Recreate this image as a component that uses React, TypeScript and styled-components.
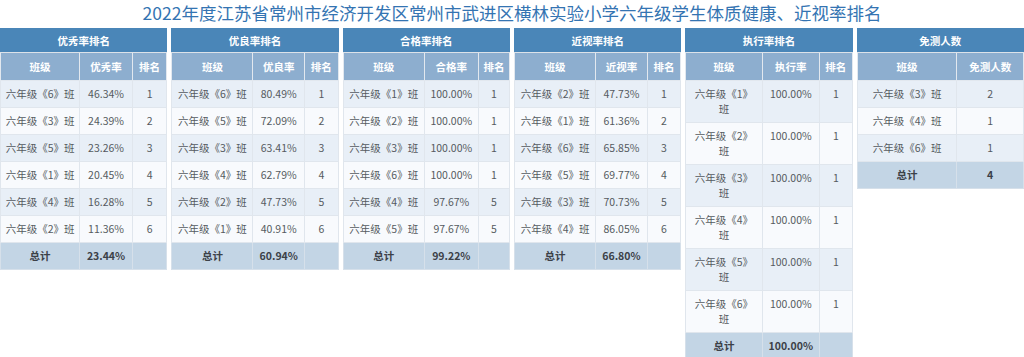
import React from "react";
import styled, { createGlobalStyle } from "styled-components";

const GlobalStyle = createGlobalStyle`
  html, body {
    margin: 0;
    padding: 0;
    background: #ffffff;
  }
  body {
    font-family: "Noto Sans CJK SC", "Noto Sans", sans-serif;
  }
`;

const Page = styled.div`
  width: 1024px;
`;

const Title = styled.h1`
  margin: 0;
  height: 28px;
  line-height: 25px;
  font-size: 17.5px;
  font-weight: normal;
  color: #3474b2;
  text-align: center;
  white-space: nowrap;
`;

const Grid = styled.div`
  display: grid;
  grid-template-columns: repeat(6, 1fr);
  column-gap: 4px;
  align-items: start;
`;

const Table = styled.table`
  width: 100%;
  border-collapse: collapse;
  table-layout: fixed;
  border: 1px solid #dce2e9;
  font-size: 10.5px;
`;

const CaptionCell = styled.th`
  height: 23px;
  padding: 0;
  background: #4a86b8;
  color: #ffffff;
  font-weight: bold;
  text-align: center;
  border: 1px solid #4a86b8;
  border-bottom-color: #dce2e9;
`;

const HeadCell = styled.th`
  height: 27px;
  padding: 0;
  background: #8daecf;
  color: #ffffff;
  font-weight: bold;
  text-align: center;
  border: 1px solid #e2e8ef;
`;

const Row = styled.tr<{ $alt: boolean }>`
  background: ${(p) => (p.$alt ? "#f8fafd" : "#e8eff7")};
`;

const Cell = styled.td<{ $pad: number; $lh: number }>`
  padding: 6px ${(p) => p.$pad}px;
  line-height: ${(p) => p.$lh}px;
  vertical-align: top;
  text-align: center;
  color: #555a60;
  border: 1px solid #e0e6ed;
`;

const TotalRow = styled.tr`
  background: #c3d5e5;
`;

const TotalCell = styled.td`
  padding: 6px 4px;
  line-height: 14px;
  text-align: center;
  font-weight: bold;
  color: #3c4148;
  border: 1px solid #d6e0ea;
`;

type Data = {
  caption: string;
  heads: string[];
  widths: number[];
  pad: number;
  lh: number;
  rows: string[][];
  total: string[];
};

const tables: Data[] = [
  {
    caption: "优秀率排名",
    heads: ["班级", "优秀率", "排名"],
    widths: [47.6, 31.7, 20.7],
    pad: 3,
    lh: 14,
    rows: [
      ["六年级《6》班", "46.34%", "1"],
      ["六年级《3》班", "24.39%", "2"],
      ["六年级《5》班", "23.26%", "3"],
      ["六年级《1》班", "20.45%", "4"],
      ["六年级《4》班", "16.28%", "5"],
      ["六年级《2》班", "11.36%", "6"],
    ],
    total: ["总计", "23.44%", ""],
  },
  {
    caption: "优良率排名",
    heads: ["班级", "优良率", "排名"],
    widths: [48.8, 31, 20.2],
    pad: 3,
    lh: 14,
    rows: [
      ["六年级《6》班", "80.49%", "1"],
      ["六年级《5》班", "72.09%", "2"],
      ["六年级《3》班", "63.41%", "3"],
      ["六年级《4》班", "62.79%", "4"],
      ["六年级《2》班", "47.73%", "5"],
      ["六年级《1》班", "40.91%", "6"],
    ],
    total: ["总计", "60.94%", ""],
  },
  {
    caption: "合格率排名",
    heads: ["班级", "合格率", "排名"],
    widths: [48.8, 32.5, 18.7],
    pad: 3,
    lh: 14,
    rows: [
      ["六年级《1》班", "100.00%", "1"],
      ["六年级《2》班", "100.00%", "1"],
      ["六年级《3》班", "100.00%", "1"],
      ["六年级《6》班", "100.00%", "1"],
      ["六年级《4》班", "97.67%", "5"],
      ["六年级《5》班", "97.67%", "5"],
    ],
    total: ["总计", "99.22%", ""],
  },
  {
    caption: "近视率排名",
    heads: ["班级", "近视率", "排名"],
    widths: [48.8, 31, 20.2],
    pad: 3,
    lh: 14,
    rows: [
      ["六年级《2》班", "47.73%", "1"],
      ["六年级《1》班", "61.36%", "2"],
      ["六年级《6》班", "65.85%", "3"],
      ["六年级《5》班", "69.77%", "4"],
      ["六年级《3》班", "70.73%", "5"],
      ["六年级《4》班", "86.05%", "6"],
    ],
    total: ["总计", "66.80%", ""],
  },
  {
    caption: "执行率排名",
    heads: ["班级", "执行率", "排名"],
    widths: [45.8, 34.6, 19.6],
    pad: 7,
    lh: 14.5,
    rows: [
      ["六年级《1》班", "100.00%", "1"],
      ["六年级《2》班", "100.00%", "1"],
      ["六年级《3》班", "100.00%", "1"],
      ["六年级《4》班", "100.00%", "1"],
      ["六年级《5》班", "100.00%", "1"],
      ["六年级《6》班", "100.00%", "1"],
    ],
    total: ["总计", "100.00%", ""],
  },
  {
    caption: "免测人数",
    heads: ["班级", "免测人数"],
    widths: [60, 40],
    pad: 3,
    lh: 14,
    rows: [
      ["六年级《3》班", "2"],
      ["六年级《4》班", "1"],
      ["六年级《6》班", "1"],
    ],
    total: ["总计", "4"],
  },
];

const RankTable: React.FC<{ data: Data }> = ({ data }) => (
  <Table>
    <colgroup>
      {data.widths.map((w, i) => (
        <col key={i} style={{ width: `${w}%` }} />
      ))}
    </colgroup>
    <thead>
      <tr>
        <CaptionCell colSpan={data.heads.length}>{data.caption}</CaptionCell>
      </tr>
      <tr>
        {data.heads.map((h) => (
          <HeadCell key={h}>{h}</HeadCell>
        ))}
      </tr>
    </thead>
    <tbody>
      {data.rows.map((r, i) => (
        <Row key={i} $alt={i % 2 === 1}>
          {r.map((c, j) => (
            <Cell key={j} $pad={j === 0 ? data.pad : 3} $lh={data.lh}>
              {c}
            </Cell>
          ))}
        </Row>
      ))}
      <TotalRow>
        {data.total.map((c, j) => (
          <TotalCell key={j}>{c}</TotalCell>
        ))}
      </TotalRow>
    </tbody>
  </Table>
);

export default function App() {
  return (
    <Page>
      <GlobalStyle />
      <Title>
        2022年度江苏省常州市经济开发区常州市武进区横林实验小学六年级学生体质健康、近视率排名
      </Title>
      <Grid>
        {tables.map((t) => (
          <RankTable key={t.caption} data={t} />
        ))}
      </Grid>
    </Page>
  );
}
